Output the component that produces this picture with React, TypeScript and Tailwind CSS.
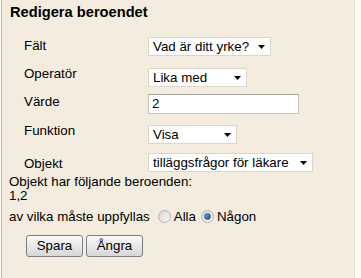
import React from "react";

function FakeSelect({ value, width }: { value: string; width: string }) {
  return (
    <div
      className={`${width} h-[19px] bg-white border border-[#ddd6c8] flex items-center justify-between pl-[4px] pr-[5px] text-[13.33px] leading-[15px] text-black whitespace-nowrap`}
    >
      <span>{value}</span>
      <svg width="7" height="4" viewBox="0 0 7 4" className="ml-[6px] shrink-0">
        <path d="M0 0 L7 0 L3.5 4 Z" fill="#000" />
      </svg>
    </div>
  );
}

function Radio({ checked }: { checked?: boolean }) {
  return (
    <span className="inline-flex w-[13px] h-[13px] rounded-full border border-[#b4b4b4] bg-gradient-to-br from-[#d8d8d8] to-[#f8f8f8] items-center justify-center">
      {checked && (
        <span className="w-[7px] h-[7px] rounded-full bg-gradient-to-br from-[#6fa8dc] to-[#1c4f8c] border border-[#2c5a90]" />
      )}
    </span>
  );
}

export default function App() {
  return (
    <div
      className="w-[361px] h-[278px] bg-[#fffdf7] flex"
      style={{ fontFamily: '"Liberation Sans", Arial, sans-serif' }}
    >
      <div className="ml-[1px] w-[354px] h-full bg-[#f3ecdf] border-l border-l-[#c8b9a0] border-r border-r-[#e6dccb] text-black">
        {/* Rubrik */}
        <h2 className="pt-[4px] pl-[8px] text-[14.67px] leading-[17px] font-bold">
          Redigera beroendet
        </h2>

        <div className="pl-[22px]">
          <div className="flex items-start mt-[16px]">
            <div className="w-[124px] mt-[1px] text-[13.33px] leading-[15px]">Fält</div>
            <FakeSelect value="Vad är ditt yrke?" width="w-[123px]" />
          </div>

          <div className="flex items-start mt-[12px]">
            <div className="w-[124px] -mt-[2px] text-[13.33px] leading-[15px]">Operatör</div>
            <FakeSelect value="Lika med" width="w-[99px]" />
          </div>

          <div className="flex items-start mt-[7px]">
            <div className="w-[124px] mt-0 text-[13.33px] leading-[15px]">Värde</div>
            <div className="w-[151px] h-[20px] bg-white border border-[#c9c5bc] border-t-[#a9a59c] pl-[3px] text-[13.33px] leading-[18px]">
              2
            </div>
          </div>

          <div className="flex items-start mt-[11px]">
            <div className="w-[124px] -mt-[2px] text-[13.33px] leading-[15px]">Funktion</div>
            <FakeSelect value="Visa" width="w-[89px]" />
          </div>

          <div className="flex items-start mt-[9px]">
            <div className="w-[124px] mt-[3px] text-[13.33px] leading-[15px]">Objekt</div>
            <FakeSelect value="tilläggsfrågor för läkare" width="w-[165px]" />
          </div>
        </div>

        <div className="pl-[7px] mt-[3px] text-[13.33px] leading-[14px]">
          <p>Objekt har följande beroenden:</p>
          <p className="mt-[0px]">1,2</p>
          <div className="flex items-center mt-[6px] h-[15px]">
            <span>av vilka måste uppfyllas</span>
            <span className="ml-[8px] flex items-center gap-[3px]">
              <Radio />
              <span>Alla</span>
            </span>
            <span className="ml-[5px] flex items-center gap-[3px]">
              <Radio checked />
              <span>Någon</span>
            </span>
          </div>

          <div className="flex gap-[3px] mt-[11px] pl-[17px]">
            <button className="w-[57px] h-[22px] border border-[#7f7f7f] rounded-[3px] bg-gradient-to-b from-[#fbfbfb] to-[#d6d6d6] text-[13.33px] text-black">
              Spara
            </button>
            <button className="w-[57px] h-[22px] border border-[#7f7f7f] rounded-[3px] bg-gradient-to-b from-[#fbfbfb] to-[#d6d6d6] text-[13.33px] text-black">
              Ångra
            </button>
          </div>
        </div>
      </div>
    </div>
  );
}
